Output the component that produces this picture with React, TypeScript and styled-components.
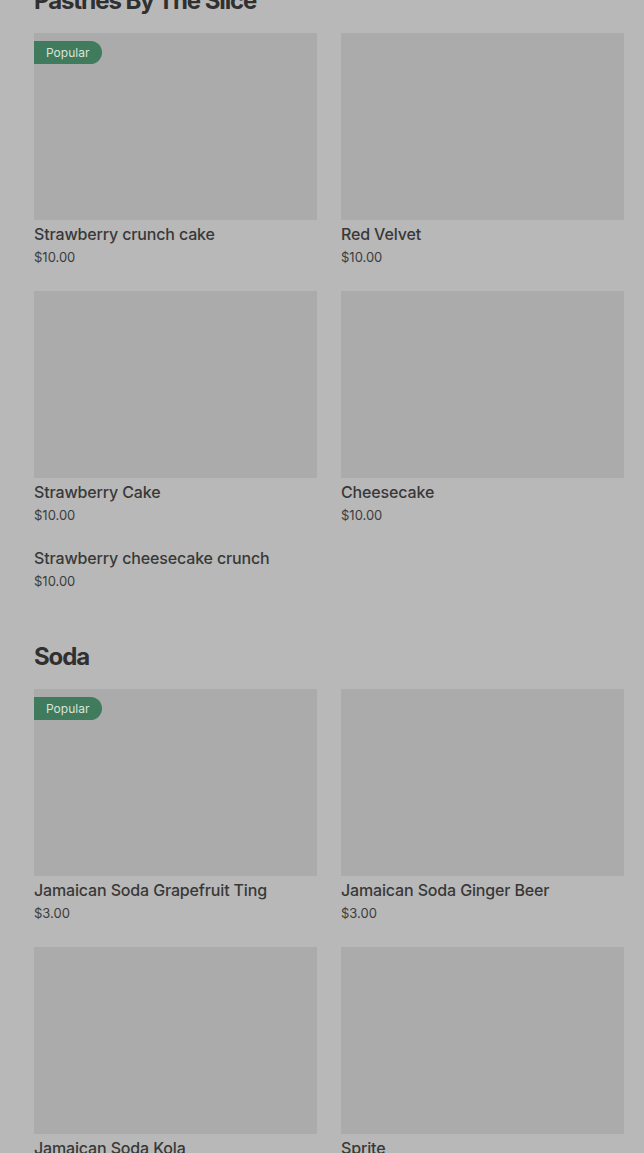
import React, { FC, ReactElement } from "react";
import styled, { createGlobalStyle } from "styled-components";

type Item = {
  name: string;
  price: string;
  image?: boolean;
  popular?: boolean;
};

type Section = {
  title: string;
  items: Item[];
};

const sections: Section[] = [
  {
    title: "Pastries By The Slice",
    items: [
      { name: "Strawberry crunch cake", price: "$10.00", image: true, popular: true },
      { name: "Red Velvet", price: "$10.00", image: true },
      { name: "Strawberry Cake", price: "$10.00", image: true },
      { name: "Cheesecake", price: "$10.00", image: true },
      { name: "Strawberry cheesecake crunch", price: "$10.00" },
    ],
  },
  {
    title: "Soda",
    items: [
      { name: "Jamaican Soda Grapefruit Ting", price: "$3.00", image: true, popular: true },
      { name: "Jamaican Soda Ginger Beer", price: "$3.00", image: true },
      { name: "Jamaican Soda Kola", price: "$3.00", image: true },
      { name: "Sprite", price: "$3.00", image: true },
    ],
  },
];

const App: FC = (): ReactElement => {
  return (
    <>
      <GlobalStyle />
      <Page>
        {sections.map((section) => (
          <MenuSection key={section.title}>
            <SectionTitle>{section.title}</SectionTitle>
            <ItemGrid>
              {section.items.map((item) => (
                <Card key={item.name} $textOnly={!item.image}>
                  {item.image && (
                    <Thumb>
                      {item.popular && <Badge>Popular</Badge>}
                    </Thumb>
                  )}
                  <ItemName>{item.name}</ItemName>
                  <Price>{item.price}</Price>
                </Card>
              ))}
            </ItemGrid>
          </MenuSection>
        ))}
      </Page>
    </>
  );
};

export default App;

const GlobalStyle = createGlobalStyle`
  html, body {
    margin: 0;
    padding: 0;
    background: #b8b8b8;
    overflow: hidden;
  }
  body {
    font-family: Inter, "Liberation Sans", sans-serif;
    color: #353535;
  }
`;

const Page = styled.div`
  margin-top: -15px;
  padding: 0 20px 0 34px;
  display: flex;
  flex-direction: column;
  gap: 50px;
`;

const MenuSection = styled.section`
  display: flex;
  flex-direction: column;
`;

const SectionTitle = styled.h2`
  margin: 0 0 16px;
  font-size: 24px;
  line-height: 32px;
  font-weight: 700;
  letter-spacing: -1.1px;
  color: #303030;
`;

const ItemGrid = styled.div`
  display: grid;
  grid-template-columns: 283px 283px;
  column-gap: 24px;
  row-gap: 24px;
`;

const Card = styled.div<{ $textOnly?: boolean }>`
  display: flex;
  flex-direction: column;
  margin-top: ${(p) => (p.$textOnly ? "-3px" : "0")};
`;

const Thumb = styled.div`
  position: relative;
  height: 187px;
  margin-bottom: 2px;
  background: #ababab;
`;

const Badge = styled.span`
  position: absolute;
  top: 8px;
  left: 0;
  height: 23px;
  padding: 0 13px 0 12px;
  display: flex;
  align-items: center;
  border-radius: 0 12px 12px 0;
  background: #3f7b5c;
  color: #d9e4dd;
  font-size: 12px;
`;

const ItemName = styled.div`
  font-size: 16px;
  line-height: 24px;
  font-weight: 500;
  letter-spacing: -0.15px;
  color: #383838;
`;

const Price = styled.div`
  margin-top: 1px;
  font-size: 13px;
  line-height: 20px;
  color: #3c3c3c;
`;
